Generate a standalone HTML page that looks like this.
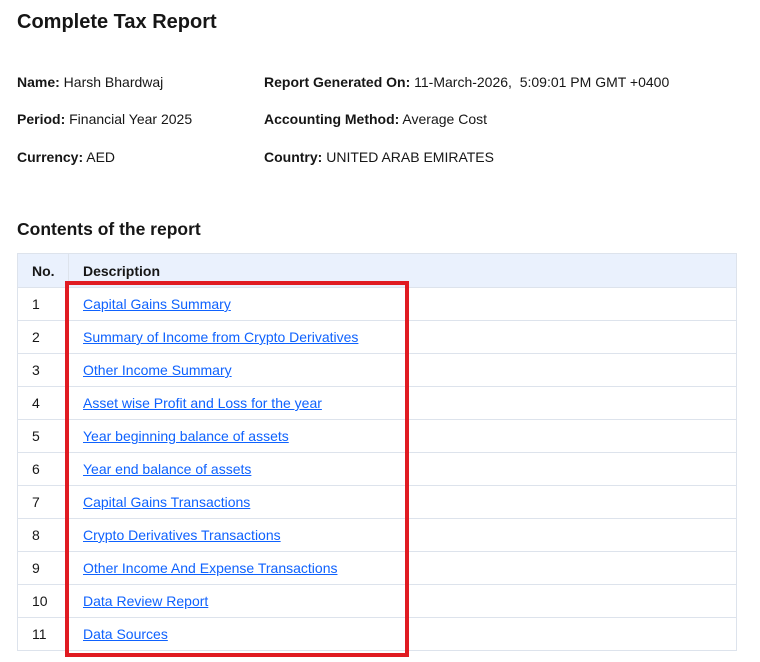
<!DOCTYPE html>
<html><head><meta charset="utf-8"><style>
body{margin:0;background:#fff;font-family:"Liberation Sans",sans-serif;color:#161616;width:760px;height:662px;position:relative;overflow:hidden}
.a{position:absolute;white-space:nowrap}
h1{position:absolute;left:17px;top:11px;margin:0;font-size:20px;font-weight:600}
.i{font-size:14px}
.i b{font-weight:700}
h2{position:absolute;left:17px;top:219px;margin:0;font-size:17.5px;font-weight:600}
table{position:absolute;left:17px;top:253px;width:720px;border-collapse:collapse;font-size:14px}
td,th{border:1px solid #dde3ec;height:32px;padding:0 0 0 14px;text-align:left}
th{background:#eaf1fd;font-weight:700;height:33px}
td:first-child,th:first-child{width:36px}
a{color:#0f62fe;text-decoration:underline}
.box{position:absolute;left:65px;top:281px;width:336px;height:368px;border:4px solid #e01b22}
</style></head><body>
<h1>Complete Tax Report</h1>
<div class="a i" style="left:17px;top:74px"><b>Name:</b> Harsh Bhardwaj</div>
<div class="a i" style="left:264px;top:74px"><b>Report Generated On:</b> 11-March-2026,&nbsp; 5:09:01 PM GMT +0400</div>
<div class="a i" style="left:17px;top:111px"><b>Period:</b> Financial Year 2025</div>
<div class="a i" style="left:264px;top:111px"><b>Accounting Method:</b> Average Cost</div>
<div class="a i" style="left:17px;top:149px"><b>Currency:</b> AED</div>
<div class="a i" style="left:264px;top:149px"><b>Country:</b> UNITED ARAB EMIRATES</div>
<h2>Contents of the report</h2>
<table>
<tr><th>No.</th><th>Description</th></tr>
<tr><td>1</td><td><a>Capital Gains Summary</a></td></tr>
<tr><td>2</td><td><a>Summary of Income from Crypto Derivatives</a></td></tr>
<tr><td>3</td><td><a>Other Income Summary</a></td></tr>
<tr><td>4</td><td><a>Asset wise Profit and Loss for the year</a></td></tr>
<tr><td>5</td><td><a>Year beginning balance of assets</a></td></tr>
<tr><td>6</td><td><a>Year end balance of assets</a></td></tr>
<tr><td>7</td><td><a>Capital Gains Transactions</a></td></tr>
<tr><td>8</td><td><a>Crypto Derivatives Transactions</a></td></tr>
<tr><td>9</td><td><a>Other Income And Expense Transactions</a></td></tr>
<tr><td>10</td><td><a>Data Review Report</a></td></tr>
<tr><td>11</td><td><a>Data Sources</a></td></tr>
</table>
<div class="box"></div>
</body></html>
